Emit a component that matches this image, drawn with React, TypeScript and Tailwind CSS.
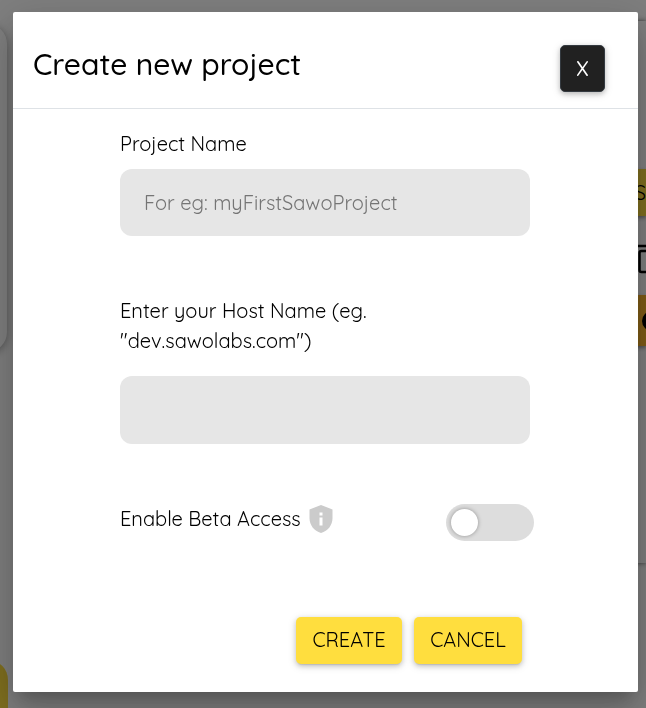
import { useState } from "react";

const yellowButton =
  "h-[47px] rounded-[5px] bg-[#ffde3e] pb-[2px] text-xl font-normal text-black shadow-[0_3px_1px_-2px_rgba(0,0,0,0.08),0_2px_5px_rgba(0,0,0,0.18),0_2px_10px_rgba(0,0,0,0.12)]";

const field =
  "w-full rounded-xl bg-[#e6e6e6] px-6 text-xl font-normal text-black outline-none placeholder:text-[#757575]";

function Backdrop() {
  return (
    <div aria-hidden="true" className="flex h-screen justify-between overflow-hidden bg-white">
      <div className="-ml-20 flex w-22 flex-col justify-between pt-6">
        <div className="mr-px h-[328px] rounded-[20px] bg-white shadow-[0_2px_8px_rgba(0,0,0,0.35)]" />
        <div className="h-12 rounded-tr-[20px] bg-[#ffde3e]" />
      </div>
      <div className="mt-[21px] flex h-[542px] w-12 flex-col overflow-hidden bg-white pt-[148px] shadow-[0_0_5px_rgba(0,0,0,0.6)]">
        <div className="flex h-[47px] shrink-0 items-center justify-end bg-[#ffde3e] text-xl font-normal shadow-[0_2px_4px_rgba(0,0,0,0.4)]">
          S
        </div>
        <svg className="mt-7 ml-8 h-8 w-8 shrink-0" viewBox="0 0 32 32" fill="none" stroke="black" strokeWidth="2.5">
          <path d="M4 26V2H26" />
          <rect x="9.500" y="7" width="20" height="21" rx="2" />
        </svg>
        <div className="mt-[19px] flex h-[51px] shrink-0 items-center bg-[#ffb72c] pl-11 shadow-[0_2px_4px_rgba(0,0,0,0.4)]">
          <svg className="h-5 w-5 shrink-0" viewBox="0 0 20 20">
            <circle cx="10" cy="10" r="10" />
          </svg>
        </div>
      </div>
    </div>
  );
}

export default function App() {
  const [name, setName] = useState("");
  const [host, setHost] = useState("");
  const [beta, setBeta] = useState(false);

  return (
    <div className="font-[Quicksand,Lato,sans-serif] text-black">
      <Backdrop />
      <div className="fixed inset-0 overflow-auto bg-black/50 pt-3 pr-2 pb-4 pl-[13px]">
        <div
          role="dialog"
          aria-labelledby="dialog-title"
          className="min-h-full rounded-[2px] bg-white shadow-[0_11px_15px_-7px_rgba(0,0,0,0.2),0_24px_38px_3px_rgba(0,0,0,0.14),0_9px_46px_8px_rgba(0,0,0,0.12)]"
        >
          <header className="flex items-center justify-between border-b border-[#dee2e6] pt-[33px] pr-[33px] pb-4 pl-5">
            <h1 id="dialog-title" className="pb-[10px] text-[30px] leading-9 font-medium">
              Create new project
            </h1>
            <button
              type="button"
              className="h-[47px] w-[45px] rounded-[5px] border border-[#343a40] bg-[#212121] text-xl font-medium text-white shadow-[0_2px_5px_rgba(0,0,0,0.2),0_2px_10px_rgba(0,0,0,0.12)]"
            >
              X
            </button>
          </header>
          <form
            className="pt-5 pr-[108px] pb-7 pl-[107px] text-xl leading-[30px] font-normal"
            onSubmit={(e) => e.preventDefault()}
          >
            <label htmlFor="project" className="block">
              Project Name
            </label>
            <input
              id="project"
              value={name}
              onChange={(e) => setName(e.target.value)}
              placeholder="For eg: myFirstSawoProject"
              className={`mt-[10px] block h-[67px] ${field}`}
            />
            <label htmlFor="host" className="mt-[60px] block max-w-[280px]">
              Enter your Host Name (eg. "dev.sawolabs.com")
            </label>
            <input
              id="host"
              value={host}
              onChange={(e) => setHost(e.target.value)}
              className={`mt-5 block h-[68px] ${field}`}
            />
            <div className="mt-[60px] -mr-1 flex h-[37px] items-center justify-between">
              <div className="flex items-center gap-2 pb-2">
                <label htmlFor="beta">Enable Beta Access</label>
                <svg className="h-7 w-6" viewBox="0 0 24 28" fill="none">
                  <path d="M12 0 23.500 4.500V13C23.500 20 19 26 12 28C5 26 .5 20 .5 13V4.500Z" fill="#cbcbcb" />
                  <path d="M10.500 7.500h3v3h-3zM10.500 12.500h3v8h-3z" fill="white" />
                </svg>
              </div>
              <input
                id="beta"
                type="checkbox"
                role="switch"
                checked={beta}
                onChange={(e) => setBeta(e.target.checked)}
                className="flex h-[37px] w-[88px] appearance-none items-center rounded-full bg-[#dddddd] px-[5px] before:h-[27px] before:w-[27px] before:rounded-full before:bg-white before:shadow-[0_0_4px_rgba(0,0,0,0.35)] checked:justify-end checked:bg-[#ffde3e]"
              />
            </div>
            <div className="mt-[76px] flex justify-end gap-3 pr-2">
              <button type="submit" className={`w-[106px] ${yellowButton}`}>
                CREATE
              </button>
              <button type="button" className={`w-[108px] ${yellowButton}`}>
                CANCEL
              </button>
            </div>
          </form>
        </div>
      </div>
    </div>
  );
}
